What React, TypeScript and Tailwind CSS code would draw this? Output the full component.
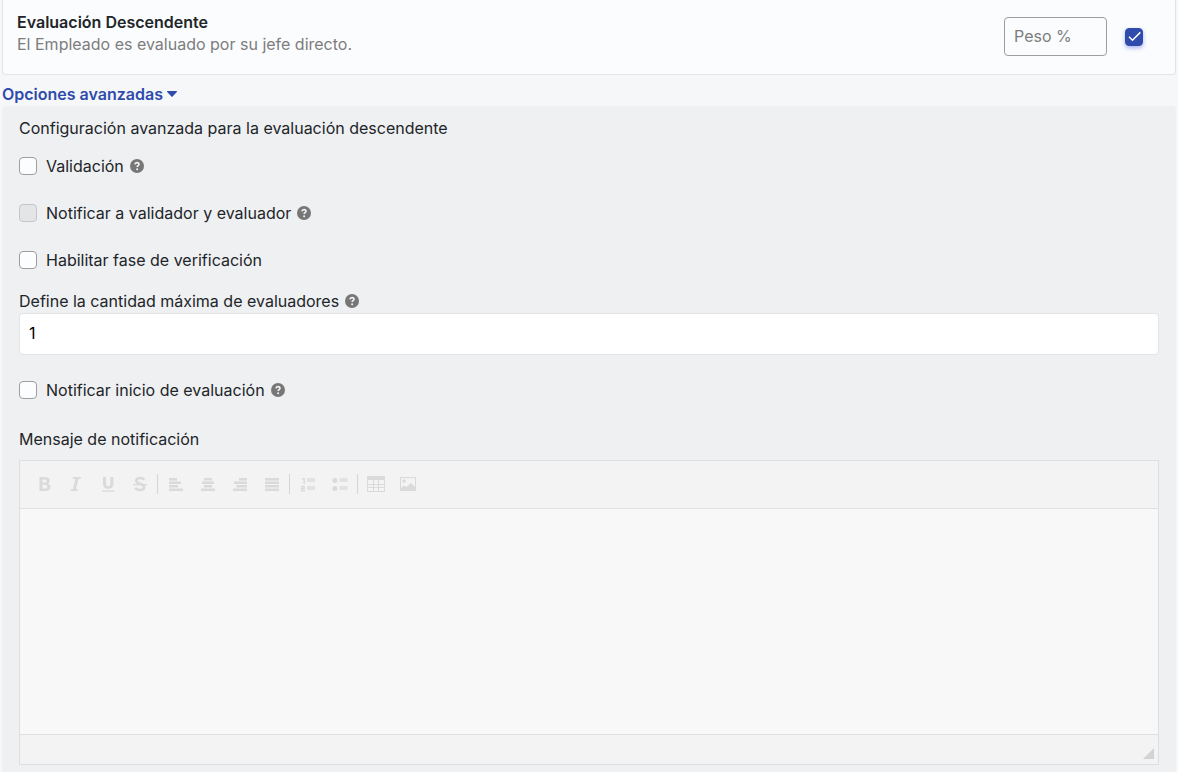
import React, { useState } from "react";
import { clsx } from "clsx";

type CheckboxProps = React.InputHTMLAttributes<HTMLInputElement>;

const Checkbox: React.FC<CheckboxProps> = ({ className, ...props }) => (
  <span className="relative block size-[18px] shrink-0">
    <input
      type="checkbox"
      className={clsx(
        "peer block size-[18px] appearance-none rounded border border-[#9c9ea1] bg-[#fcfdfe]",
        "checked:border-[#2f4bac] checked:bg-[#2f4bac] checked:shadow-[0_2px_4px_rgba(47,75,220,0.4)]",
        "disabled:border-[#c3c5c7] disabled:bg-[#e4e5e7]",
        className
      )}
      {...props}
    />
    <svg
      viewBox="0 0 18 18"
      fill="none"
      stroke="#fff"
      strokeWidth="1.5"
      className="pointer-events-none absolute inset-0 hidden peer-checked:block"
    >
      <path d="M4 8.7 7.5 12.2 15.3 4.4" />
    </svg>
  </span>
);

const HelpIcon: React.FC = () => (
  <svg viewBox="0 0 14 14" className="size-[14px] shrink-0">
    <circle cx="7" cy="7" r="7" fill="#777" />
    <path d="M5 5.400C5.100 4.200 5.900 3.600 7 3.600s2 .7 2 1.700c0 1.300-1.900 1.300-1.900 2.800" fill="none" stroke="#f4f4f5" strokeWidth="1.600" />
    <circle cx="7.100" cy="10.200" r="1" fill="#f4f4f5" />
  </svg>
);

interface OptionProps {
  id: string;
  label: string;
  help?: boolean;
  disabled?: boolean;
}

const Option: React.FC<OptionProps> = ({ id, label, help, disabled }) => (
  <div className="flex h-6 items-center">
    <Checkbox id={id} disabled={disabled} />
    <label htmlFor={id} className="ml-[9px]">
      {label}
    </label>
    {help && (
      <span className="ml-[6px]">
        <HelpIcon />
      </span>
    )}
  </div>
);

// Toolbar drawings, all on an 18x18 grid
const ICONS = {
  bold: (
    <path
      fillRule="evenodd"
      d="M4.500 2H10c3 0 4.700 1.300 4.700 3.700 0 1.400-.7 2.400-1.900 2.900 1.700.4 2.600 1.600 2.600 3.400 0 2.700-1.900 4-5 4H4.500zM7.500 4.400v3.200h2.200c1.300 0 2-.5 2-1.600s-.7-1.600-2-1.600zM7.500 9.800v3.800h2.400c1.500 0 2.300-.6 2.300-1.900s-.8-1.900-2.300-1.900z"
    />
  ),
  italic: <path d="M6 2h8l-.4 1.800h-2.200L8.900 14.200h2.200l-.4 1.800H3.500l.4-1.800h2L8.400 3.800H5.600z" />,
  underline: (
    <path d="M4 2h3v6.800c0 1.700.7 2.500 2.200 2.500s2.200-.8 2.200-2.500V2h3v6.900c0 3.100-1.900 4.800-5.200 4.800S4 12 4 8.900zM3 15.500h12.500v1.300H3z" />
  ),
  strike: (
    <>
      <path
        fill="none"
        stroke="currentColor"
        strokeWidth="2.600"
        d="M13.300 4.700C12.500 3.500 11 3 9.200 3 6.700 3 5.200 4.100 5.200 5.800 5.200 9.500 13.100 8 13.100 12c0 1.900-1.600 3-4.200 3-2.300 0-3.900-.8-4.600-2.300"
      />
      <path d="M2 9h14v1.300H2z" />
    </>
  ),
  left: <path d="M2 3h8v2.500H2zM2 6.500h12V9H2zM2 10h9v2.500H2zM2 13.500h14V16H2z" />,
  center: <path d="M5 3h8v2.500H5zM3 6.500h12V9H3zM5 10h8v2.500H5zM2 13.500h14V16H2z" />,
  right: <path d="M8 3h8v2.500H8zM3 6.500h13V9H3zM5.500 10H16v2.500H5.500zM2 13.500h14V16H2z" />,
  justify: <path d="M2 3h14v2.500H2zM2 6.500h14V9H2zM2 10h14v2.500H2zM2 13.500h14V16H2z" />,
  ordered: (
    <>
      <path d="M8 3h8v4H8zM8 11h8v4H8z" opacity=".7" />
      <path fill="none" stroke="currentColor" strokeWidth="1.500" d="M3 3.700h2.200V9M2 11.600h3.200v2H2.700v2.200h3.300" />
    </>
  ),
  bullets: (
    <>
      <path d="M8.500 3h8v4h-8zM8.500 11h8v4h-8z" opacity=".7" />
      <circle cx="3.900" cy="5.500" r="2.500" />
      <circle cx="3.900" cy="13.500" r="2.500" />
    </>
  ),
  table: (
    <path
      fillRule="evenodd"
      d="M0 1h18v16H0zM1 5v4h5V5zM7 5v4h4V5zM12 5v4h5V5zM1 10v2h5v-2zM7 10v2h4v-2zM12 10v2h5v-2zM1 13v3h5v-3zM7 13v3h4v-3zM12 13v3h5v-3z"
    />
  ),
  image: (
    <>
      <path fillRule="evenodd" d="M1 2h16v14H1zM2 3v12h14V3z" />
      <circle cx="5" cy="6" r="1.700" />
      <path d="M2 15v-2l3-2.500 2.500 1.500L12 8l4 4v3z" />
    </>
  ),
};

type Tool = { icon: keyof typeof ICONS; label: string };

const TOOL_GROUPS: Tool[][] = [
  [
    { icon: "bold", label: "Negrita" },
    { icon: "italic", label: "Cursiva" },
    { icon: "underline", label: "Subrayado" },
    { icon: "strike", label: "Tachado" },
  ],
  [
    { icon: "left", label: "Alinear a la izquierda" },
    { icon: "center", label: "Centrar" },
    { icon: "right", label: "Alinear a la derecha" },
    { icon: "justify", label: "Justificar" },
  ],
  [
    { icon: "ordered", label: "Lista numerada" },
    { icon: "bullets", label: "Lista con viñetas" },
  ],
  [
    { icon: "table", label: "Tabla" },
    { icon: "image", label: "Imagen" },
  ],
];

const MessageEditor: React.FC = () => (
  <div className="border border-[#dedfe1]">
    <div className="flex h-12 items-center border-b border-[#dedfe1] bg-[#f3f3f3] px-2 pb-0.5">
      {TOOL_GROUPS.map((group, index) => (
        <div key={group[0].icon} className="flex items-center">
          {index > 0 && <span className="mr-0.5 ml-px h-5 w-px bg-[#d5d5d5]" />}
          {group.map(({ icon, label }) => (
            <button
              key={icon}
              type="button"
              disabled
              aria-label={label}
              className="flex size-8 items-center justify-center text-[#dadada]"
            >
              <svg viewBox="0 0 18 18" fill="currentColor" className="size-[18px]">
                {ICONS[icon]}
              </svg>
            </button>
          ))}
        </div>
      ))}
    </div>
    <textarea
      id="mensaje"
      disabled
      className="block h-[225px] w-full resize-none bg-[#f8f8f8] p-3 outline-none"
    />
    <div className="flex h-[30px] items-end justify-end border-t border-[#dedfe1] bg-[#f3f3f3] pr-1 pb-[5px]">
      <svg viewBox="0 0 11 11" className="size-[11px] fill-[#d3d3d3]">
        <path d="M11 0v11H0z" />
      </svg>
    </div>
  </div>
);

export default function App() {
  const [open, setOpen] = useState(true);

  return (
    <main className="flex min-h-screen flex-col bg-[#f6f7f9] px-0.5 font-[Inter,sans-serif] text-base text-[#212529]">
      <section className="flex items-start justify-between rounded-b border border-t-0 border-[#e3e4e8] bg-[#fbfcfe] px-[14px] pt-[11px] pb-[18px]">
        <div className="leading-[22px]">
          <h2 className="font-semibold">Evaluación Descendente</h2>
          <p className="text-[#7d7d7d]">El Empleado es evaluado por su jefe directo.</p>
        </div>
        <div className="flex items-center gap-[18px] pt-[6px] pr-[18px]">
          <input
            type="text"
            placeholder="Peso %"
            aria-label="Peso %"
            className="h-[39px] w-[103px] rounded border border-[#9c9ea1] bg-[#fbfcfe] px-[9px] pb-0.5 outline-none placeholder:text-[#7d7d7d]"
          />
          <Checkbox defaultChecked aria-label="Evaluación Descendente" />
        </div>
      </section>

      <button
        type="button"
        aria-expanded={open}
        onClick={() => setOpen(!open)}
        className="flex h-[31px] items-center gap-1 self-start pt-[7px] font-semibold text-[#2f4bac]"
      >
        Opciones avanzadas
        <svg viewBox="0 0 10 6" className="h-[6px] w-[10px] fill-current">
          <path d="M.5 0h9q.8.200.3.900L5.600 5.600q-.6.500-1.200 0L.2.900Q-.3.200.5 0z" />
        </svg>
      </button>

      {open && (
        <section className="flex-1 rounded-t bg-[#eff0f2] px-[17px] pt-[10px] pb-[7px]">
          <p>Configuración avanzada para la evaluación descendente</p>

          <div className="mt-[14px] flex flex-col gap-[23px]">
            <Option id="validacion" label="Validación" help />
            <Option id="notificar-validador" label="Notificar a validador y evaluador" help disabled />
            <Option id="verificacion" label="Habilitar fase de verificación" />
          </div>

          <div className="mt-[17px] mb-[23px]">
            <div className="flex h-6 items-center gap-[6px]">
              <label htmlFor="evaluadores">Define la cantidad máxima de evaluadores</label>
              <HelpIcon />
            </div>
            <input
              id="evaluadores"
              type="text"
              defaultValue="1"
              className="block h-[42px] w-full rounded border border-[#e3e4e8] bg-white px-[9px] pb-0.5 text-black outline-none"
            />
          </div>

          <Option id="notificar-inicio" label="Notificar inicio de evaluación" help />

          <label htmlFor="mensaje" className="mt-[25px] mb-[9px] block">
            Mensaje de notificación
          </label>
          <MessageEditor />
        </section>
      )}
    </main>
  );
}
